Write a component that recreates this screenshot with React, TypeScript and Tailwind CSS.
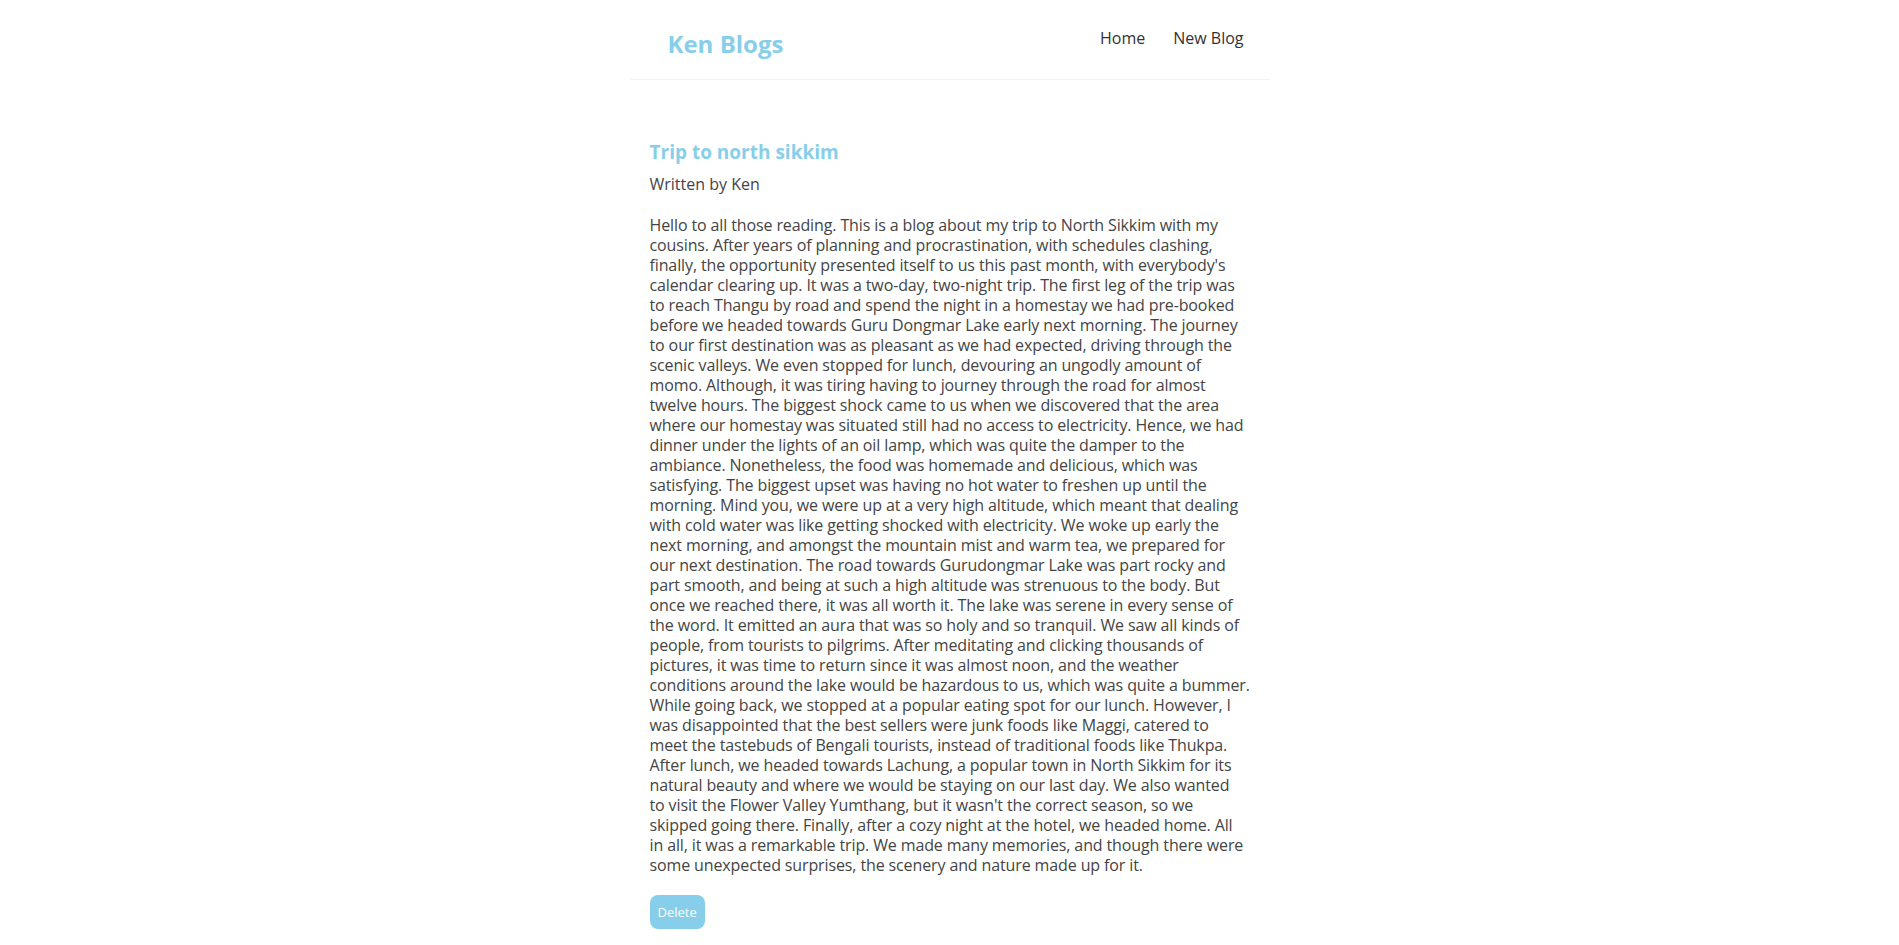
const blog = {
  title: 'Trip to north sikkim',
  author: 'Ken',
  // kept as the lines the original layout broke them into
  body: [
    'Hello to all those reading. This is a blog about my trip to North Sikkim with my',
    'cousins. After years of planning and procrastination, with schedules clashing,',
    "finally, the opportunity presented itself to us this past month, with everybody's",
    'calendar clearing up. It was a two-day, two-night trip. The first leg of the trip was',
    'to reach Thangu by road and spend the night in a homestay we had pre-booked',
    'before we headed towards Guru Dongmar Lake early next morning. The journey',
    'to our first destination was as pleasant as we had expected, driving through the',
    'scenic valleys. We even stopped for lunch, devouring an ungodly amount of',
    'momo. Although, it was tiring having to journey through the road for almost',
    'twelve hours. The biggest shock came to us when we discovered that the area',
    'where our homestay was situated still had no access to electricity. Hence, we had',
    'dinner under the lights of an oil lamp, which was quite the damper to the',
    'ambiance. Nonetheless, the food was homemade and delicious, which was',
    'satisfying. The biggest upset was having no hot water to freshen up until the',
    'morning. Mind you, we were up at a very high altitude, which meant that dealing',
    'with cold water was like getting shocked with electricity. We woke up early the',
    'next morning, and amongst the mountain mist and warm tea, we prepared for',
    'our next destination. The road towards Gurudongmar Lake was part rocky and',
    'part smooth, and being at such a high altitude was strenuous to the body. But',
    'once we reached there, it was all worth it. The lake was serene in every sense of',
    'the word. It emitted an aura that was so holy and so tranquil. We saw all kinds of',
    'people, from tourists to pilgrims. After meditating and clicking thousands of',
    'pictures, it was time to return since it was almost noon, and the weather',
    'conditions around the lake would be hazardous to us, which was quite a bummer.',
    'While going back, we stopped at a popular eating spot for our lunch. However, I',
    'was disappointed that the best sellers were junk foods like Maggi, catered to',
    'meet the tastebuds of Bengali tourists, instead of traditional foods like Thukpa.',
    'After lunch, we headed towards Lachung, a popular town in North Sikkim for its',
    'natural beauty and where we would be staying on our last day. We also wanted',
    "to visit the Flower Valley Yumthang, but it wasn't the correct season, so we",
    'skipped going there. Finally, after a cozy night at the hotel, we headed home. All',
    'in all, it was a remarkable trip. We made many memories, and though there were',
    'some unexpected surprises, the scenery and nature made up for it.',
  ],
};

function Navbar() {
  return (
    <nav className="max-w-[640px] mx-auto px-5 h-20 flex items-start border-b border-[#f2f2f2]">
      <h1 className="ml-[18px] mt-[29px] text-[24px] leading-[30px] font-bold text-[#87ceeb]">
        Ken Blogs
      </h1>
      <div className="ml-auto mt-[27px] flex">
        <a href="/" className="ml-4 px-1.5 text-[16px] leading-[22px] text-[#333]">
          Home
        </a>
        <a href="/create" className="ml-4 px-1.5 text-[16px] leading-[22px] text-[#333]">
          New Blog
        </a>
      </div>
    </nav>
  );
}

function BlogDetails() {
  return (
    <div className="max-w-[600px] mx-auto mt-[60px]">
      <article>
        <h2 className="text-[19px] leading-[24px] font-bold text-[#87ceeb] mb-[10px]">
          {blog.title}
        </h2>
        <p className="text-[16px] leading-[20px] text-[#444]">Written by {blog.author}</p>
        <div className="mt-[21px] text-[16px] leading-[20px] text-[#444] tracking-[-0.12px]">
          {blog.body.map((line, i) => (
            <span key={i} className="block whitespace-nowrap">
              {line}
            </span>
          ))}
        </div>
        <button className="mt-5 bg-[#87ceeb] text-white text-[13px] leading-[18px] px-2 py-2 rounded-lg">
          Delete
        </button>
      </article>
    </div>
  );
}

export default function App() {
  return (
    <div className="min-h-screen bg-white" style={{ fontFamily: '"Open Sans", sans-serif' }}>
      <Navbar />
      <BlogDetails />
    </div>
  );
}
